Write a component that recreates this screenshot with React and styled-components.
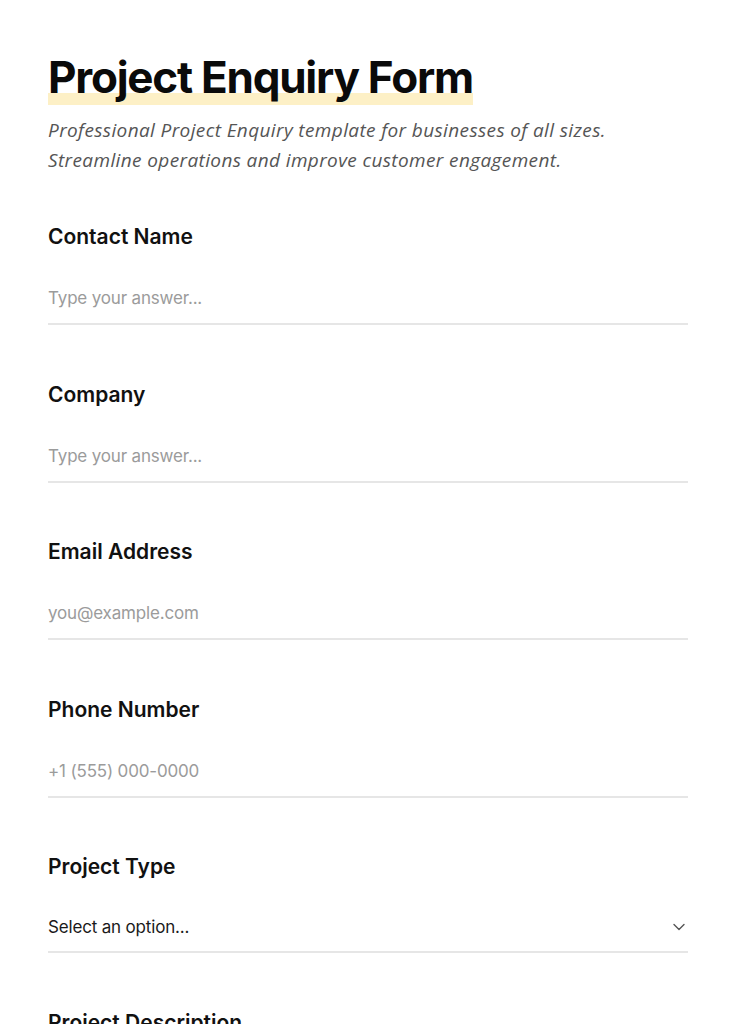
import styled, { createGlobalStyle } from "styled-components";

const GlobalStyle = createGlobalStyle`
    * { box-sizing: border-box; }
    body {
        margin: 0;
        background: #ffffff;
        font-family: Inter, "Noto Sans", sans-serif;
        color: #111111;
    }
`;

const fields = [
    { label: "Contact Name", placeholder: "Type your answer..." },
    { label: "Company", placeholder: "Type your answer..." },
    { label: "Email Address", placeholder: "you@example.com" },
    { label: "Phone Number", placeholder: "+1 (555) 000-0000" },
    { label: "Project Type", select: true },
    { label: "Project Description", placeholder: "Type your answer..." },
];

function Chevron() {
    return (
        <svg width="14" height="14" viewBox="0 0 14 14" fill="none">
            <path d="M2 4.5 L7 9.5 L12 4.5" stroke="#555" strokeWidth="1.4" strokeLinecap="round" strokeLinejoin="round" />
        </svg>
    );
}

export default function App() {
    return (
        <Page>
            <GlobalStyle />
            <Header>
                <Title>Project Enquiry Form</Title>
                <Subtitle>
                    Professional Project Enquiry template for businesses of all sizes.<br />
                    Streamline operations and improve customer engagement.
                </Subtitle>
            </Header>
            <Form>
                {fields.map((f) => (
                    <Field key={f.label}>
                        <Label>{f.label}</Label>
                        {f.select ? (
                            <SelectBox>
                                <span>Select an option...</span>
                                <Chevron />
                            </SelectBox>
                        ) : (
                            <Input placeholder={f.placeholder} />
                        )}
                    </Field>
                ))}
            </Form>
        </Page>
    );
}

const Page = styled.div`
    max-width: 736px;
    padding: 49px 48px 80px;
`;

const Header = styled.header`
    display: flex;
    flex-direction: column;
    align-items: flex-start;
    margin-bottom: 48px;
`;

const Title = styled.h1`
    margin: 0;
    font-size: 44px;
    line-height: 56px;
    font-weight: 700;
    letter-spacing: -0.028em;
    color: #0a0a0a;
    background: linear-gradient(to bottom, transparent 78%, #fdf0c6 78%, #fdf0c6 100%);
`;

const Subtitle = styled.p`
    margin: 10px 0 0;
    font-family: "Open Sans", Lato, sans-serif;
    font-style: italic;
    font-size: 19px;
    line-height: 30px;
    letter-spacing: 0.02em;
    color: #555555;
`;

const Form = styled.form`
    display: flex;
    flex-direction: column;
    gap: 55.5px;
`;

const Field = styled.div`
    display: flex;
    flex-direction: column;
    gap: 24px;
`;

const Label = styled.label`
    font-size: 21px;
    line-height: 28px;
    font-weight: 600;
    letter-spacing: 0;
    color: #111111;
`;

const Input = styled.input`
    font-family: Inter, "Noto Sans", sans-serif;
    font-size: 17px;
    line-height: 24px;
    letter-spacing: -0.01em;
    padding: 11px 0 13px;
    border: none;
    border-bottom: 2px solid #e6e6e6;
    outline: none;
    color: #222;
    background: transparent;
    &::placeholder { color: #9b9b9b; }
`;

const SelectBox = styled.div`
    display: flex;
    align-items: center;
    justify-content: space-between;
    font-size: 17px;
    line-height: 24px;
    letter-spacing: -0.01em;
    padding: 10px 2px 12px 0;
    border-bottom: 2px solid #e6e6e6;
    color: #1a1a1a;
`;
